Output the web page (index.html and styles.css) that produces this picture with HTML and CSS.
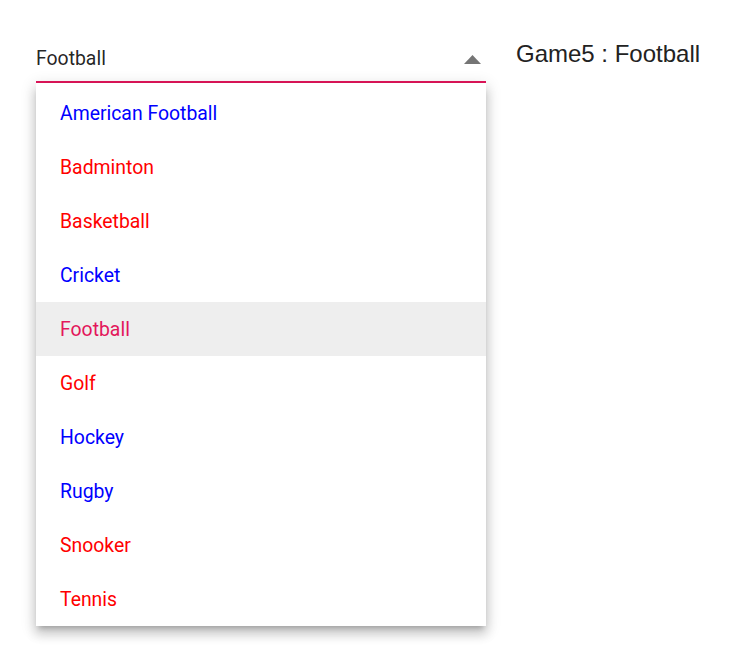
FILE: index.html
```html
<!DOCTYPE html>
<html>
<head>
<meta charset="utf-8">
<link rel="stylesheet" href="styles.css">
</head>
<body>
<div class="page">
  <div class="dropdown">
    <div class="input">
      <span class="value">Football</span>
      <svg class="arrow" width="17" height="9" viewBox="0 0 17 9"><polygon points="0,9 8.5,0 17,9" fill="#757575"/></svg>
    </div>
    <ul class="popup">
      <li class="item blue">American Football</li>
      <li class="item red">Badminton</li>
      <li class="item red">Basketball</li>
      <li class="item blue">Cricket</li>
      <li class="item selected">Football</li>
      <li class="item red">Golf</li>
      <li class="item blue">Hockey</li>
      <li class="item blue">Rugby</li>
      <li class="item red">Snooker</li>
      <li class="item red">Tennis</li>
    </ul>
  </div>
  <div class="result">Game5 : Football</div>
</div>
</body>
</html>
```
FILE: styles.css
```css
html, body {
  margin: 0;
  padding: 0;
  background: #fff;
}
body {
  font-family: Roboto, "Noto Sans", sans-serif;
  min-height: 664px;
}
.page {
  display: flex;
  align-items: flex-start;
  gap: 30px;
  padding: 36px 0 30px 36px;
}
.dropdown {
  width: 450px;
}
.input {
  display: flex;
  align-items: flex-start;
  justify-content: space-between;
  padding: 11px 5px 10px 0;
  border-bottom: 2px solid #e3165b;
}
.value {
  font-size: 19.4px;
  line-height: 24px;
  color: rgba(0, 0, 0, 0.87);
}
.arrow {
  display: block;
  margin-top: 8px;
}
.popup {
  list-style: none;
  margin: 0;
  padding: 3px 0 0;
  background: #fff;
  box-shadow: 0 5px 5px -3px rgba(0, 0, 0, 0.2), 0 8px 10px 1px rgba(0, 0, 0, 0.14), 0 3px 14px 2px rgba(0, 0, 0, 0.12);
}
.item {
  height: 52px;
  padding: 2px 0 0 24px;
  line-height: 52px;
  font-size: 19.4px;
}
.blue { color: #0000ff; }
.red { color: #ff0000; }
.selected {
  color: #e3165b;
  background: #eeeeee;
}
.result {
  margin-top: 4px;
  font-family: "Liberation Sans", Arial, sans-serif;
  font-size: 24px;
  color: #222;
}
```
